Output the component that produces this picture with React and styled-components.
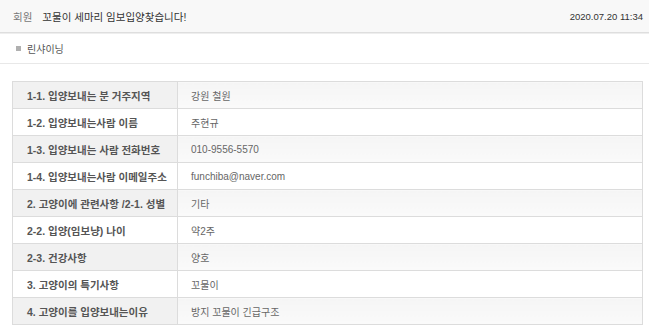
import React from "react";
import styled, { createGlobalStyle } from "styled-components";

const rows = [
  ["1-1. 입양보내는 분 거주지역", "강원 철원"],
  ["1-2. 입양보내는사람 이름", "주현규"],
  ["1-3. 입양보내는 사람 전화번호", "010-9556-5570"],
  ["1-4. 입양보내는사람 이메일주소", "funchiba@naver.com"],
  ["2. 고양이에 관련사항 /2-1. 성별", "기타"],
  ["2-2. 입양(임보냥) 나이", "약2주"],
  ["2-3. 건강사항", "양호"],
  ["3. 고양이의 특기사항", "꼬물이"],
  ["4. 고양이를 입양보내는이유", "방지 꼬물이 긴급구조"],
];

export default function App() {
  return (
    <>
      <GlobalStyle />
      <Header>
        <Category>회원</Category>
        <Title>꼬물이 세마리 임보입양찾습니다!</Title>
        <Date>2020.07.20 11:34</Date>
      </Header>
      <Author>
        <Bullet />
        린샤이닝
      </Author>
      <InfoTable>
        <tbody>
          {rows.map(([label, value]) => (
            <Row key={label}>
              <Label>{label}</Label>
              <Value>{value}</Value>
            </Row>
          ))}
        </tbody>
      </InfoTable>
    </>
  );
}

const GlobalStyle = createGlobalStyle`
  body {
    margin: 0;
    background: #fff;
    font-family: "Liberation Sans", "Noto Sans CJK KR", sans-serif;
    color: #333;
  }
`;

const Header = styled.header`
  display: flex;
  align-items: center;
  height: 32px;
  padding: 0 6px 0 13px;
  background: #f8f8f8;
  border-bottom: 1px solid #dedede;
  box-shadow: 0 1px 0 #eee;
`;

const Category = styled.span`
  font-size: 10.5px;
  color: #777;
  margin-right: 10px;
`;

const Title = styled.h1`
  margin: 0;
  font-size: 10.5px;
  font-weight: normal;
  color: #333;
  flex: 1;
`;

const Date = styled.span`
  font-size: 9.5px;
  color: #333;
`;

const Author = styled.div`
  display: flex;
  align-items: center;
  height: 29px;
  margin-top: 1px;
  padding-left: 16px;
  font-size: 10px;
  color: #555;
  border-bottom: 1px solid #e8e8e8;
`;

const Bullet = styled.span`
  flex: none;
  width: 5px;
  height: 5px;
  background: #b0b0b0;
  margin-right: 6px;
`;

const InfoTable = styled.table`
  width: 631px;
  margin: 17px 0 0 12px;
  border-collapse: collapse;
  border: 1px solid #dcdcdc;
`;

const Row = styled.tr`
  height: 27px;
  background: #fff;
  &:nth-child(odd) {
    background: #f7f7f7;
  }
`;

const Label = styled.th`
  width: 165px;
  padding: 0 0 0 14px;
  text-align: left;
  font-size: 10.5px;
  font-weight: bold;
  color: #555;
  white-space: nowrap;
  border: 1px solid #dcdcdc;
  box-sizing: border-box;
  tr:nth-child(odd) & {
    background: #f1f1f1;
  }
`;

const Value = styled.td`
  padding: 0 0 0 13px;
  font-size: 10px;
  color: #666;
  white-space: nowrap;
  border: 1px solid #dcdcdc;
  tr:nth-child(odd) & {
    background: linear-gradient(#f5f5f5, #fafafa);
  }
`;
